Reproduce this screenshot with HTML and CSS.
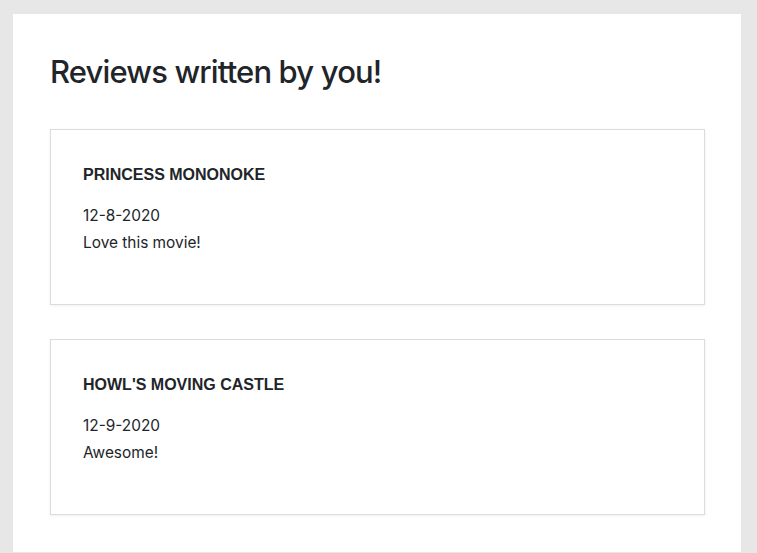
FILE: index.html
```html
<!DOCTYPE html>
<html>
<head>
<meta charset="utf-8">
<link rel="stylesheet" href="styles.css">
</head>
<body>
<main class="panel">
  <h1 class="page-title">Reviews written by you!</h1>
  <section class="review">
    <h2 class="review-title">PRINCESS MONONOKE</h2>
    <p class="review-date">12-8-2020</p>
    <p class="review-text">Love this movie!</p>
  </section>
  <section class="review">
    <h2 class="review-title">HOWL'S MOVING CASTLE</h2>
    <p class="review-date">12-9-2020</p>
    <p class="review-text">Awesome!</p>
  </section>
</main>
</body>
</html>
```
FILE: styles.css
```css
html, body {
  margin: 0;
  padding: 0;
  background: #e7e7e7;
  height: 100%;
  overflow: hidden;
}
.panel {
  margin: 14px 16px 0 13px;
  background: #fff;
  padding: 36px 36px 40px 37px;
  box-sizing: border-box;
  height: 538px;
  display: flex;
  flex-direction: column;
  gap: 34px;
}
.page-title {
  margin: 0 0 1px 0;
  font-family: Inter, "Noto Sans", sans-serif;
  font-size: 31px;
  font-weight: 500;
  color: #212529;
  line-height: 44px;
  letter-spacing: -0.85px;
}
.review {
  flex-shrink: 0;
  border: 1px solid #dcdcdc;
  box-shadow: 0 1px 3px rgba(0,0,0,0.06);
  padding: 35px 32px 40px 32px;
  height: 176px;
  box-sizing: border-box;
}
.review-title {
  margin: 0 0 17px 0;
  font-family: "Liberation Sans", Arial, sans-serif;
  font-weight: 700;
  font-size: 16px;
  line-height: 20px;
  color: #212529;
}
.review-date, .review-text {
  margin: 0;
  font-family: Inter, "Noto Sans", sans-serif;
  font-size: 15.4px;
  line-height: 27px;
  color: #212529;
}
```
